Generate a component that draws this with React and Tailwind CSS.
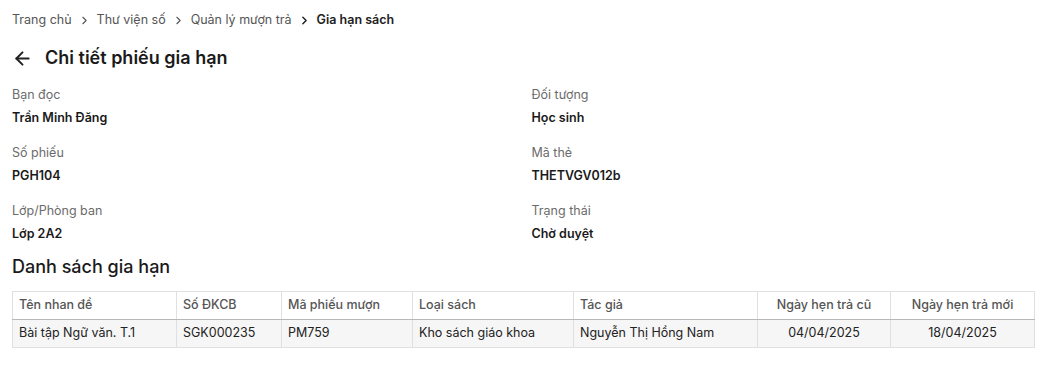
import { ArrowLeft, ChevronRight } from "lucide-react";

const info = [
  ["Bạn đọc", "Trần Minh Đăng", "Đối tượng", "Học sinh"],
  ["Số phiếu", "PGH104", "Mã thẻ", "THETVGV012b"],
  ["Lớp/Phòng ban", "Lớp 2A2", "Trạng thái", "Chờ duyệt"],
];

const cols = [
  { title: "Tên nhan đề", w: "w-[164px]" },
  { title: "Số ĐKCB", w: "w-[105px]" },
  { title: "Mã phiếu mượn", w: "w-[131px]" },
  { title: "Loại sách", w: "w-[161px]" },
  { title: "Tác giả", w: "w-[184px]" },
  { title: "Ngày hẹn trả cũ", w: "w-[133px]", center: true },
  { title: "Ngày hẹn trả mới", w: "", center: true },
];

const row = [
  "Bài tập Ngữ văn. T.1",
  "SGK000235",
  "PM759",
  "Kho sách giáo khoa",
  "Nguyễn Thị Hồng Nam",
  "04/04/2025",
  "18/04/2025",
];

const Field = ({ label, value }) => (
  <div className="flex flex-col">
    <span className="text-[12.5px] leading-[20px] text-[#6b6b6b]">{label}</span>
    <span className="text-[12.5px] leading-[20px] font-semibold text-[#1a1a1a] mt-[3px]">
      {value}
    </span>
  </div>
);

export default function App() {
  return (
    <div className="bg-white min-h-[372px] px-3 pt-[10px] font-['Inter',sans-serif] text-[#1a1a1a]">
      <div className="flex items-center gap-[6px] text-[12.5px] leading-[20px] text-[#555]">
        <span>Trang chủ</span>
        <ChevronRight size={13} strokeWidth={2} className="text-[#555]" />
        <span>Thư viện số</span>
        <ChevronRight size={13} strokeWidth={2} className="text-[#555]" />
        <span>Quản lý mượn trả</span>
        <ChevronRight size={13} strokeWidth={2.75} className="text-[#222]" />
        <span className="font-semibold text-[#222]">Gia hạn sách</span>
      </div>

      <div className="flex items-center gap-[12px] mt-[16px]">
        <ArrowLeft size={21} strokeWidth={2.25} className="text-[#222]" />
        <h1 className="text-[18px] leading-[24px] font-semibold text-[#1a1a1a]">
          Chi tiết phiếu gia hạn
        </h1>
      </div>

      <div className="grid grid-cols-2 gap-x-4 gap-y-[15px] mt-[15px]">
        {info.map(([l1, v1, l2, v2]) => [
          <Field key={l1} label={l1} value={v1} />,
          <Field key={l2} label={l2} value={v2} />,
        ])}
      </div>

      <h2 className="text-[18px] leading-[24px] font-medium text-[#1a1a1a] mt-[11px]">
        Danh sách gia hạn
      </h2>

      <table className="w-full border-collapse mt-[12px] text-[12.5px]">
        <thead>
          <tr className="bg-white">
            {cols.map((c) => (
              <th
                key={c.title}
                className={`${c.w} ${
                  c.center ? "text-center" : "text-left"
                } font-medium text-[#555] h-[28px] px-[6px] border border-[#e0e0e0] border-b-[#b8b8b8]`}
              >
                {c.title}
              </th>
            ))}
          </tr>
        </thead>
        <tbody>
          <tr className="bg-[#f6f6f6]">
            {row.map((v, i) => (
              <td
                key={i}
                className={`${
                  cols[i].center ? "text-center" : "text-left"
                } h-[28px] px-[6px] text-[#222] border border-[#e0e0e0]`}
              >
                {v}
              </td>
            ))}
          </tr>
        </tbody>
      </table>
    </div>
  );
}
